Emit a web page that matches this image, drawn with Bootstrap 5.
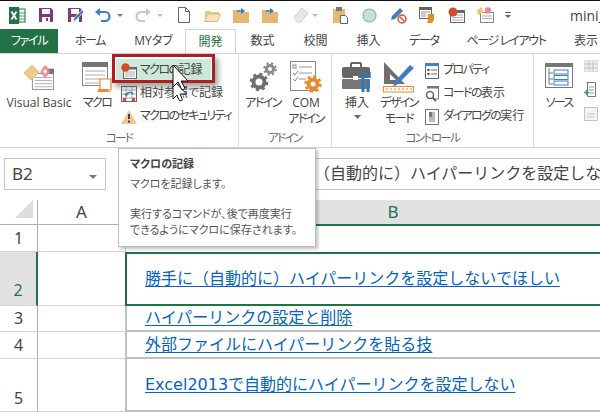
<!DOCTYPE html>
<html lang="ja">
<head>
<meta charset="utf-8">
<title>Excel</title>
<link href="https://cdn.jsdelivr.net/npm/bootstrap@5.3.0/dist/css/bootstrap.min.css" rel="stylesheet">
<style>
html,body{width:600px;height:412px;overflow:hidden;background:#fff}
body{font-family:"Open Sans","Noto Sans CJK JP",sans-serif;font-size:12px;color:#444;line-height:1.2;border-top:1px solid #111;position:relative;font-feature-settings:"palt"}
svg{display:block;flex:none}
.kn{letter-spacing:-1.6px}
.kt{letter-spacing:-1.3px}
.qat{height:28px;padding-left:9px;position:relative}
.qb{height:28px;display:flex;align-items:center;flex:none}
.ql2{margin-left:2px}.ql6{margin-left:6px}.ql10{margin-left:10px}.ql11{margin-left:11px}.ql12{margin-left:12px}.ql13{margin-left:13px}.ql14{margin-left:14px}.ql15{margin-left:15px}
.wintitle{position:absolute;left:570px;top:7px;font-size:14px;color:#444;white-space:nowrap}
.tabsbar{height:25px;border-bottom:1px solid #d4d4d4}
.tabi{height:25px;line-height:24px;text-align:center;white-space:nowrap;flex:none;color:#444;font-size:12px}
.tabfile{background:#217346;color:#fff}
.tabon{background:#fff;color:#217346;border:1px solid #d4d4d4;border-bottom:0;height:25px}
.w58{width:58px}.w64{width:64px}.w63{width:63px}.w51{width:51px}.w53{width:53px}.w106{width:106px}.w54{width:54px}
.ribbon{height:94px;border-bottom:1px solid #d4d4d4}
.rgroup{height:93px;border-right:1px solid #dcdcdc;position:relative;flex:none;flex-direction:column;display:flex;align-items:stretch}
.rg1{width:239px}.rg2{width:93px}.rg3{width:202px}.rg4{width:66px;border-right:0}
.rbody{height:76px;display:flex;padding-top:5px}
.rlabel{height:16px;text-align:center;color:#666;font-size:11.5px;line-height:16px}
.big{display:flex;flex-direction:column;align-items:center;flex:none;text-align:center;white-space:nowrap;line-height:16px}
.bico{height:36px;display:flex;align-items:center}
.bw78{width:78px}.bw38{width:38px}.bw48{width:48px}.bw50{width:50px}.bw34{width:34px}
.smalls{display:flex;flex-direction:column;flex:none}
.srowb{height:23px;display:flex;align-items:center;gap:3px;padding-left:5px;white-space:nowrap}
.srowc{gap:4px;padding-left:1px}
.srowon{background:#cde8d8;width:95px}
.greyic{display:flex;flex-direction:column;gap:10px;padding:1px 0 0 0}
.fbar{height:42px;padding:10px 0 0 4px;position:relative}
.namebox{width:102px;height:32px;border:1px solid #c6c6c6;font-size:17px;padding-left:7px;line-height:29px;color:#444;flex:none;font-family:"Noto Sans","Noto Sans CJK JP",sans-serif}
.formula{height:32px;border:1px solid #c6c6c6;border-width:1px 0;margin-left:14px;flex:1;overflow:hidden;white-space:nowrap;font-size:16px;line-height:29px;padding-left:146px;font-feature-settings:normal;color:#444}
.gapline{height:10px}
.shead{height:25px}
.sroww{font-family:"Noto Sans","Noto Sans CJK JP",sans-serif}
.rh{width:38px;flex:none;border-right:1px solid #b0b0b0;border-bottom:1px solid #d4d4d4;font-size:16px;color:#444;text-align:center;display:flex;align-items:flex-end;justify-content:center;line-height:22px;padding-bottom:2px}
.ca{width:88px;flex:none;border-right:1px solid #d4d4d4;border-bottom:1px solid #d4d4d4}
.hcorner{border-bottom:1px solid #b0b0b0;align-items:stretch;padding-bottom:0}
.ha{font-size:17px;text-align:center;line-height:24px;border-bottom:1px solid #b0b0b0;color:#444}
.hb{flex:1;background:#e1e1e1;color:#217346;border-bottom:2px solid #217346;font-size:17px;text-align:center;line-height:24px;height:26px;padding-left:60px}
.cb{flex:1;font-size:16px;display:flex;align-items:center;padding-left:18px;white-space:nowrap;overflow:hidden;font-feature-settings:normal;font-family:"DejaVu Sans","Noto Sans CJK JP",sans-serif}
.cb a{color:#0563c1;text-decoration:underline;text-underline-offset:2px}
.r1{height:27px}.r2{height:54px}.r3{height:26px}.r4{height:27px}.r5{height:53px}
.sel{border:2px solid #217346;border-right:0;margin-left:-1px}
.rhon{background:#e1e1e1;color:#217346;border-right:2px solid #217346;border-bottom-color:#d4d4d4;padding-bottom:4px}
.cg{border-left:2px solid #bfbfbf;border-bottom:2px solid #bfbfbf;margin-left:-1px}
.tip{position:absolute;left:118px;top:147px;width:198px;height:99px;background:#fff;border:1px solid #bebebe;box-shadow:2px 2px 3px rgba(0,0,0,.25);padding:7px 11px;font-size:11px;line-height:16px;color:#555;z-index:5;white-space:nowrap}
.tip b{font-weight:700;color:#444;display:block;margin-bottom:4px}
.tip p{margin:0 0 14px}
.redbox{position:absolute;left:112px;top:0;width:103px;height:29px;border:3px solid #ad1f24;box-shadow:3px 4px 6px rgba(70,90,70,.55);z-index:3;pointer-events:none}
.cursorpic{position:absolute;left:168px;top:62px;z-index:4}
</style>
</head>
<body>
<div class="qat d-flex">
  <div class="qb"><svg width="17" height="17" viewBox="0 0 17 17"><rect x="6" y="2" width="10" height="13" fill="#fff" stroke="#217346"/><path d="M10 2v13M6 6h10M6 9h10M6 12h10" stroke="#217346" stroke-width=".8"/><rect x="0" y="0" width="10" height="17" fill="#217346"/><path d="M2.5 4.5l5 8M7.5 4.5l-5 8" stroke="#fff" stroke-width="1.8"/></svg></div>
  <div class="qb ql12"><svg width="16" height="16" viewBox="0 0 16 16"><path d="M1 1h12l2 2v12H1z" fill="#80397b"/><rect x="4" y="2" width="8" height="5" fill="#fff"/><rect x="4" y="10" width="8" height="5" fill="#fff"/><rect x="8" y="11" width="2" height="3" fill="#80397b"/></svg></div>
  <div class="qb ql13"><svg width="18" height="17" viewBox="0 0 18 17"><path d="M1 1h12l2 2v12H1z" fill="#80397b"/><rect x="4" y="2" width="8" height="5" fill="#fff"/><rect x="4" y="10" width="8" height="5" fill="#fff"/><path d="M6 15l1-4 8-8 2 2-8 8z" fill="#3f7fc1" stroke="#fff" stroke-width=".6"/></svg></div>
  <div class="qb ql10"><svg width="16" height="14" viewBox="0 0 16 14"><path d="M2 4h8a4.500 4.500 0 0 1 0 9H6" fill="none" stroke="#3f7fc1" stroke-width="2.200"/><path d="M0 4l5-4v8z" fill="#3f7fc1"/></svg></div>
  <div class="qb ql6"><svg width="6" height="3" viewBox="0 0 6 3"><path d="M0 0h6L3 3z" fill="#777"/></svg></div>
  <div class="qb ql12"><svg width="16" height="14" viewBox="0 0 16 14"><path d="M14 4H6a4.500 4.500 0 0 0 0 9h4" fill="none" stroke="#c8c8c8" stroke-width="2.200"/><path d="M16 4l-5-4v8z" fill="#c8c8c8"/></svg></div>
  <div class="qb ql6"><svg width="6" height="3" viewBox="0 0 6 3"><path d="M0 0h6L3 3z" fill="#bbb"/></svg></div>
  <div class="qb ql15"><svg width="12" height="16" viewBox="0 0 12 16"><path d="M.5.500h7l4 4v11H.5z" fill="#fff" stroke="#666"/><path d="M7.500.500v4h4" fill="none" stroke="#666"/></svg></div>
  <div class="qb ql14"><svg width="17" height="13" viewBox="0 0 17 13"><path d="M1 2h5l1 1h8v2H4l-3 7z" fill="#e9c88f"/><path d="M3.500 5H16.500l-3 7.500H.5z" fill="#f6e3bd" stroke="#e0b877"/></svg></div>
  <div class="qb ql12"><svg width="16" height="15" viewBox="0 0 16 15"><rect y="4" width="16" height="11" fill="#e3b873"/><path d="M0 4h7V2H0z" fill="#e3b873"/><path d="M4 3h5" stroke="#2f7dc4" stroke-width="1.500"/><path d="M8 0l4 3-4 3z" fill="#2f7dc4"/></svg></div>
  <div class="qb ql13"><svg width="16" height="15" viewBox="0 0 16 15"><rect y="4" width="16" height="11" fill="#e3b873"/><path d="M0 4h7V2H0z" fill="#e3b873"/><path d="M4 3h5" stroke="#2f7dc4" stroke-width="1.500"/><path d="M8 0l4 3-4 3z" fill="#2f7dc4"/></svg></div>
  <div class="qb ql15"><svg width="17" height="16" viewBox="0 0 17 16"><path d="M1 10l8-9 6 5-7 9H4z" fill="#e6e6e6" stroke="#cfcfcf"/></svg></div>
  <div class="qb ql2"><svg width="6" height="3" viewBox="0 0 6 3"><path d="M0 0h6L3 3z" fill="#bbb"/></svg></div>
  <div class="qb ql15"><svg width="15" height="17" viewBox="0 0 15 17"><rect y="2" width="12" height="14" fill="#e3b873"/><rect x="3" y="0" width="6" height="4" fill="#777"/><path d="M7.500 8.500h5l2 2v6h-7z" fill="#fff" stroke="#666"/></svg></div>
  <div class="qb ql14"><svg width="15" height="15" viewBox="0 0 15 15"><circle cx="7.500" cy="7.500" r="6.500" fill="#c6e0d2" stroke="#8db5a0" stroke-width="1.200"/></svg></div>
  <div class="qb ql13"><svg width="17" height="17" viewBox="0 0 17 17"><path d="M1 13l1-4 8-8 3 3-8 8z" fill="#3f7fc1"/><circle cx="12" cy="12" r="4" fill="#fff" stroke="#d6533a" stroke-width="1.500"/><path d="M9.500 9.500l5 5" stroke="#d6533a" stroke-width="1.500"/></svg></div>
  <div class="qb ql12"><svg width="17" height="16" viewBox="0 0 17 16"><rect x=".5" y=".5" width="12" height="11" fill="#fff" stroke="#666"/><rect width="13" height="3" fill="#666"/><path d="M2 5h9M2 7h5M2 9h5" stroke="#999"/><path d="M9 7h6v6l-2 3H8l1-3z" fill="#e98a2d"/></svg></div>
  <div class="qb ql12"><svg width="17" height="16" viewBox="0 0 17 16"><rect x="2.500" y="3.500" width="14" height="12" fill="#fff" stroke="#666"/><rect x="2" y="3" width="15" height="3" fill="#666"/><path d="M4 8h11M4 10.500h11M4 13h11" stroke="#aaa"/><circle cx="5" cy="5" r="4.500" fill="#d24d2b"/></svg></div>
  <div class="qb ql12"><svg width="17" height="16" viewBox="0 0 17 16"><rect x="3.500" y="5.500" width="13" height="10" fill="#fff" stroke="#888"/><path d="M5 9h10M5 11.500h10" stroke="#aaa"/><path d="M5 0l-5 3 1 5 5-2z" fill="#edc47a"/><circle cx="11" cy="3.500" r="3.200" fill="#e8869a"/></svg></div>
  <div class="qb ql11"><svg width="6" height="6" viewBox="0 0 6 6"><path d="M0 0h6v1H0zM0 3h6L3 6z" fill="#666"/></svg></div>
  <div class="wintitle">mini_</div>
</div>

<div class="tabsbar d-flex overflow-hidden">
  <div class="tabi tabfile w58 kt">ファイル</div>
  <div class="tabi w64 kt">ホーム</div>
  <div class="tabi w63">MYタブ</div>
  <div class="tabi tabon w51">開発</div>
  <div class="tabi w53">数式</div>
  <div class="tabi w53">校閲</div>
  <div class="tabi w53">挿入</div>
  <div class="tabi w58 kt">データ</div>
  <div class="tabi w106 kt">ページ レイアウト</div>
  <div class="tabi w54">表示</div>
</div>

<div class="ribbon d-flex position-relative">
  <div class="rgroup rg1">
    <div class="rbody">
      <div class="big bw78">
        <div class="bico"><svg width="30" height="27" viewBox="0 0 34 30"><rect x="9.500" y="10.500" width="24" height="18" fill="#fff" stroke="#888"/><rect x="26" y="5" width="8" height="6" fill="#777"/><path d="M12 15h20M12 18.500h20M12 22h20M12 25.500h20" stroke="#aaa"/><path d="M9 1L0 10l8 8 9-9z" fill="#edcb88" stroke="#e3b86a"/><path d="M19 9l5 6 5-6-4-7h-2z" fill="#ea8fa3" stroke="#e77" stroke-width=".8"/><path d="M22 8l2-3 2 3-2 3z" fill="#fff"/></svg></div>
        <span>Visual Basic</span>
      </div>
      <div class="big bw38">
        <div class="bico"><svg width="30" height="30" viewBox="0 0 30 30"><rect x=".5" y="1.500" width="25" height="22" fill="#fff" stroke="#888"/><rect y="0" width="26" height="5" fill="#777"/><path d="M3 9h20M3 13h20M3 17h20M3 21h14" stroke="#aaa"/><path d="M18 17h11v10l-2 3H16l2-3z" fill="#fff" stroke="#e98a2d" stroke-width="1.200"/><path d="M16 27h11l-1 3H16z" fill="#e98a2d"/></svg></div>
        <span class="kn">マクロ</span>
      </div>
      <div class="smalls">
        <div class="srowb srowon"><svg width="16" height="16" viewBox="0 0 16 16"><rect x="2.500" y="4.500" width="13" height="11" fill="#fff" stroke="#666"/><rect x="2" y="4" width="14" height="2.500" fill="#666"/><path d="M4 9h10M4 11h10M4 13h10" stroke="#aaa"/><circle cx="4.500" cy="4.500" r="4.200" fill="#d24d2b"/></svg><span><span class="kn">マクロの</span>記録</span></div>
        <div class="srowb"><svg width="16" height="16" viewBox="0 0 16 16"><rect x=".5" y=".5" width="15" height="15" fill="#fff" stroke="#666"/><path d="M1 4h14M1 8h14M1 12h14M5 1v14M11 1v14" stroke="#aaa"/><path d="M5 9a4 4 0 0 1 7-1" fill="none" stroke="#3f7fc1" stroke-width="1.500"/><path d="M3 8l4-1-1 4z" fill="#3f7fc1"/><path d="M2 12h3v3H2zM11 12h3v3h-3z" fill="#d24d2b"/></svg>相対参照で記録</div>
        <div class="srowb"><svg width="16" height="14" viewBox="0 0 16 14"><path d="M8 0l8 14H0z" fill="#edc98e"/><path d="M7 4h2v5H7zM7 10.500h2v2H7z" fill="#444"/></svg><span class="kn">マクロのセキュリティ</span></div>
      </div>
    </div>
    <div class="rlabel kn">コード</div>
  </div>
  <div class="rgroup rg2">
    <div class="rbody">
      <div class="big bw48">
        <div class="bico"><svg width="28" height="30" viewBox="0 0 28 30"><g fill="none" stroke="#6f6f6f"><circle cx="10" cy="20" r="5.500" stroke-width="4"/><circle cx="10" cy="20" r="8" stroke-width="2.500" stroke-dasharray="3 3.300"/></g><g fill="none" stroke="#8a8a8a"><circle cx="21" cy="7" r="3.500" stroke-width="3"/><circle cx="21" cy="7" r="5.800" stroke-width="2" stroke-dasharray="2.300 2.300"/></g></svg></div>
        <span class="kn">アドイン</span>
      </div>
      <div class="big bw38">
        <div class="bico"><svg width="32" height="32" viewBox="0 0 32 32"><rect x=".5" y=".5" width="25" height="29" fill="#fff" stroke="#888"/><path d="M9 6h13M9 12h13M9 18h7" stroke="#999"/><rect x="3" y="4" width="3" height="3" fill="none" stroke="#888"/><path d="M3 12l2 2 3-4M3 18l2 2 3-4" fill="none" stroke="#888"/><circle cx="23" cy="23" r="4.500" fill="#fff" stroke="#e98a2d" stroke-width="4"/><circle cx="23" cy="23" r="7.500" fill="none" stroke="#e98a2d" stroke-width="2.500" stroke-dasharray="3 2.900"/></svg></div>
        <span>COM<br><span class="kn">アドイン</span></span>
      </div>
    </div>
    <div class="rlabel kn">アドイン</div>
  </div>
  <div class="rgroup rg3">
    <div class="rbody">
      <div class="big bw50">
        <div class="bico"><svg width="30" height="30" viewBox="0 0 30 30"><rect x="9" y="1" width="10" height="6" rx="1" fill="none" stroke="#666" stroke-width="2"/><rect y="5" width="28" height="11" rx="2" fill="#666"/><rect y="17" width="28" height="10" rx="1" fill="#777"/><rect x="11" y="14" width="5" height="4" fill="#fff"/><path d="M21 30V14" stroke="#3078c0" stroke-width="3"/><path d="M26 30V17" stroke="#3078c0" stroke-width="3"/><path d="M19 10v5h4v-5M24 10v5h4v-5" fill="none" stroke="#3078c0" stroke-width="1.500"/></svg></div>
        <span>挿入</span>
        <svg class="mt-1" width="7" height="4" viewBox="0 0 7 4"><path d="M0 0h7L3.500 4z" fill="#666"/></svg>
      </div>
      <div class="big bw34 me-2">
        <div class="bico"><svg width="32" height="31" viewBox="0 0 32 31"><path d="M1 0l21 22H1z" fill="#6f6f6f"/><path d="M7 12l6 6H7z" fill="#fff"/><path d="M10 25l2-6L27 3l4 3-16 16z" fill="#3f7fc1"/><rect x=".5" y="24.500" width="30" height="5.500" fill="#fff" stroke="#e98a2d"/><path d="M4 26v2M8 26v2M12 26v2M16 26v2M20 26v2M24 26v2M28 26v2" stroke="#e98a2d"/></svg></div>
        <span class="kn">デザイン<br>モード</span>
      </div>
      <div class="smalls">
        <div class="srowb srowc"><svg width="14" height="16" viewBox="0 0 14 16"><rect x=".5" y=".5" width="13" height="15" fill="#fff" stroke="#666"/><rect width="14" height="3" fill="#3f7fc1"/><circle cx="3.500" cy="7" r="1.300" fill="#555"/><circle cx="3.500" cy="11" r="1.300" fill="#555"/><path d="M6 7h6M6 11h6" stroke="#666"/></svg><span class="kn">プロパティ</span></div>
        <div class="srowb srowc"><svg width="14" height="16" viewBox="0 0 14 16"><path d="M2 .5h11.500V13H8" fill="#fff" stroke="#777"/><rect x="2" width="12" height="2.500" fill="#777"/><circle cx="5" cy="9" r="3.500" fill="#fff" stroke="#666" stroke-width="1.500"/><path d="M7.500 11.500L11 15" stroke="#666" stroke-width="2"/></svg><span><span class="kn">コードの</span>表示</span></div>
        <div class="srowb srowc"><svg width="14" height="16" viewBox="0 0 14 16"><rect x=".5" y=".5" width="13" height="15" fill="#fff" stroke="#777"/><rect x="4" y="3" width="6" height="10" fill="#bbb"/><rect x="4" y="3" width="3" height="5" fill="#777"/></svg><span><span class="kn">ダイアログの</span>実行</span></div>
      </div>
    </div>
    <div class="rlabel kn">コントロール</div>
  </div>
  <div class="rgroup rg4 d-flex">
    <div class="rbody">
      <div class="big bw50">
        <div class="bico"><svg width="28" height="28" viewBox="0 0 28 28"><rect x=".5" y=".5" width="27" height="24" fill="#fff" stroke="#777"/><rect width="28" height="4" fill="#777"/><path d="M4 5v16h4M4 10h4M4 16h4" fill="none" stroke="#777"/><g fill="#fff" stroke="#3f7fc1"><rect x="9" y="7" width="14" height="4"/><rect x="9" y="12.500" width="14" height="4"/><rect x="9" y="18" width="14" height="4"/></g></svg></div>
        <span class="kn">ソース</span>
      </div>
      <div class="greyic">
        <svg width="14" height="12" viewBox="0 0 14 12"><rect width="14" height="12" fill="#eee" stroke="#ccc"/><path d="M1 4h12M1 8h12M5 1v10M9 1v10" stroke="#c4c4c4"/></svg>
        <svg width="14" height="15" viewBox="0 0 14 15"><path d="M3.500.5h8v14h-8z" fill="#fff" stroke="#777"/><path d="M5 5h5M5 8h5M5 11h5" stroke="#999"/><path d="M2 0h4" stroke="#3f7fc1" stroke-width="1.200"/><path d="M0 10.500h5M2.500 8v5" stroke="#3aa06d" stroke-width="1.500"/></svg>
        <svg width="14" height="14" viewBox="0 0 14 14"><rect x=".5" y=".5" width="13" height="13" fill="#f4f4f4" stroke="#c4c4c4"/><path d="M3 7h8M3 10h8" stroke="#c4c4c4"/></svg>
      </div>
    </div>
  </div>
  <div class="redbox"></div>
</div>

<svg class="cursorpic" width="30" height="40" viewBox="0 0 30 40"><path d="M5 17v19l4-4 2.500 6 3-1-2.500-6h6.500z" fill="#fff" stroke="#222"/><path d="M5 2v22l5-5 4 8 3-1.500-4-7.500h7z" fill="#fff" stroke="#111"/></svg>

<div class="tip">
  <b>マクロの記録</b>
  <p>マクロを記録します。</p>
  実行するコマンドが、後で再度実行<br>できるようにマクロに保存されます。
</div>

<div class="fbar d-flex">
  <div class="namebox d-flex justify-content-between">B2<svg class="me-2 mt-3" width="8" height="4" viewBox="0 0 8 4"><path d="M0 0h8L4 4z" fill="#777"/></svg></div>
  <div class="formula">勝手に（自動的に）ハイパーリンクを設定しないでほしい</div>
</div>
<div class="gapline"></div>

<div class="sroww">
  <div class="d-flex shead">
    <div class="rh hcorner"><svg class="ms-auto me-1 mb-1" width="18" height="18" viewBox="0 0 18 18"><path d="M18 0v18H0z" fill="#dcdcdc"/></svg></div>
    <div class="ca ha">A</div>
    <div class="hb">B</div>
  </div>
  <div class="d-flex r1"><div class="rh">1</div><div class="ca"></div><div class="cb"></div></div>
  <div class="d-flex r2"><div class="rh rhon">2</div><div class="ca"></div><div class="cb sel"><a href="#">勝手に（自動的に）ハイパーリンクを設定しないでほしい</a></div></div>
  <div class="d-flex r3"><div class="rh">3</div><div class="ca"></div><div class="cb cg"><a href="#">ハイパーリンクの設定と削除</a></div></div>
  <div class="d-flex r4"><div class="rh">4</div><div class="ca"></div><div class="cb cg"><a href="#">外部ファイルにハイパーリンクを貼る技</a></div></div>
  <div class="d-flex r5"><div class="rh">5</div><div class="ca"></div><div class="cb cg"><a href="#">Excel2013で自動的にハイパーリンクを設定しない</a></div></div>
</div>
<script src="https://cdn.jsdelivr.net/npm/bootstrap@5.3.0/dist/js/bootstrap.bundle.min.js"></script>
</body>
</html>
